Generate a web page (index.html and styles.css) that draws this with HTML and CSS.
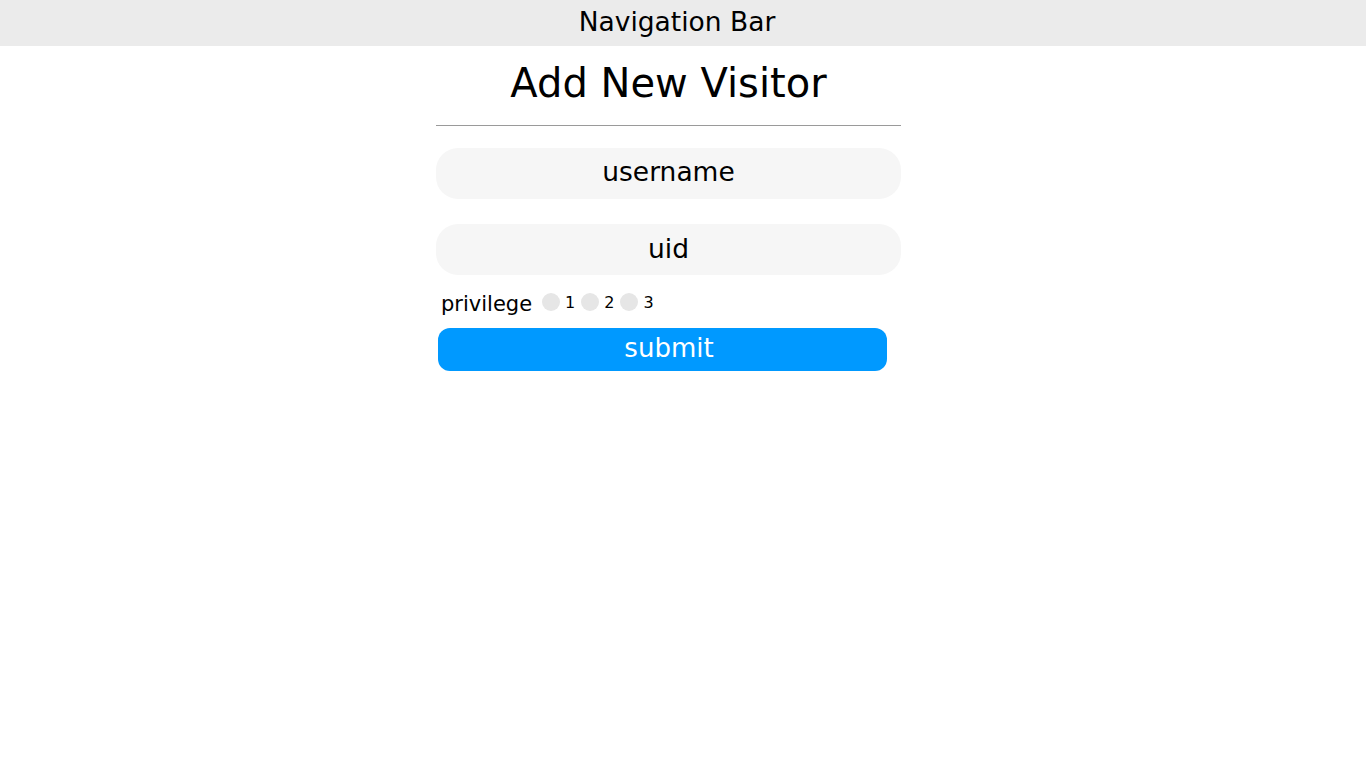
FILE: index.html
```html
<!DOCTYPE html>
<html>
<head>
<meta charset="utf-8">
<link rel="stylesheet" href="styles.css">
</head>
<body>
<header class="navbar">Navigation Bar</header>
<main class="container">
  <h1 class="title">Add New Visitor</h1>
  <hr class="divider">
  <form class="form">
    <input class="field" type="text" placeholder="username">
    <input class="field" type="text" placeholder="uid">
    <div class="privilege">
      <span class="privilege-label">privilege</span>
      <label class="opt"><span class="radio"></span><span class="num">1</span></label>
      <label class="opt"><span class="radio"></span><span class="num">2</span></label>
      <label class="opt"><span class="radio"></span><span class="num">3</span></label>
    </div>
    <button class="submit" type="button">submit</button>
  </form>
</main>
</body>
</html>
```
FILE: styles.css
```css
* { box-sizing: border-box; }
html, body { margin: 0; padding: 0; background: #fff; }
body { font-family: "DejaVu Sans", Verdana, sans-serif; color: #000; }

.navbar {
  height: 46px;
  background: #ebebeb;
  display: flex;
  align-items: center;
  justify-content: center;
  font-size: 26.5px;
  padding-right: 12px;
  padding-bottom: 3px;
}

.container {
  width: 465px;
  margin-left: 436px;
  display: flex;
  flex-direction: column;
}

.title {
  margin: 12px 0 0;
  font-size: 40px;
  font-weight: normal;
  text-align: center;
  line-height: 50px;
}

.divider {
  margin: 17px 0 22px;
  border: 0;
  border-top: 1px solid #9a9a9a;
  height: 0;
}

.form { display: flex; flex-direction: column; }

.field {
  height: 51px;
  border: 0;
  border-radius: 22px;
  background: #f6f6f6;
  font-family: inherit;
  font-size: 26.5px;
  text-align: center;
  margin-bottom: 25px;
  outline: none;
}
.field:first-of-type { padding-bottom: 5px; }
.field:last-of-type { margin-bottom: 16px; padding-bottom: 4px; }
.field::placeholder { color: #000; }

.privilege {
  display: flex;
  align-items: center;
  padding-left: 5px;
  height: 26px;
  gap: 6px;
}
.privilege-label { font-size: 21px; margin-right: 4px; }
.opt { display: flex; align-items: center; gap: 5px; margin-top: -4px; }
.radio {
  width: 18px; height: 18px; border-radius: 50%;
  background: #e6e6e6; display: inline-block;
}
.num { font-size: 16px; }

.submit {
  margin: 11px 0 0 2px;
  width: 449px;
  height: 43px;
  border: 0;
  border-radius: 12px;
  background: #0099ff;
  color: #fff;
  font-family: inherit;
  font-size: 26px;
  line-height: 40px;
  padding: 0 0 3px 13px;
}
```
